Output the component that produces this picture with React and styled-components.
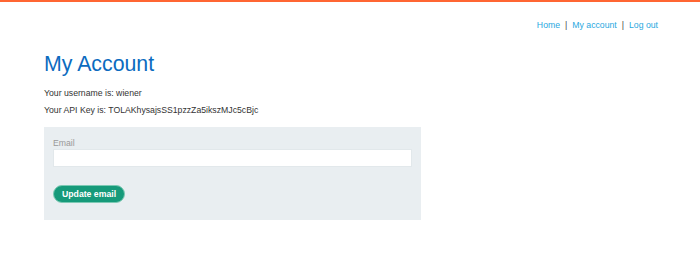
import React from "react";
import styled, { createGlobalStyle } from "styled-components";

const Global = createGlobalStyle`
  html, body { margin: 0; padding: 0; background: #fff; }
  body { font-family: "Liberation Sans", Arial, sans-serif; color: #333; }
`;

const Page = styled.div`
  border-top: 2px solid #ff6633;
  min-height: 278px;
`;

const Header = styled.header`
  display: flex;
  justify-content: flex-end;
  align-items: center;
  height: 45px;
  padding-right: 42px;
`;

const Nav = styled.nav`
  display: flex;
  align-items: center;
  gap: 5px;
  font-size: 8.7px;
`;

const NavLink = styled.a`
  color: #29a8e0;
  text-decoration: none;
`;

const Sep = styled.span`
  color: #444;
`;

const Main = styled.main`
  padding-left: 44px;
`;

const Title = styled.h1`
  margin: 4px 0 11px;
  font-size: 21.3px;
  font-weight: 400;
  color: #0b6bbf;
  line-height: 26px;
`;

const Line = styled.p`
  margin: 0 0 7px;
  font-size: 8.7px;
  line-height: 10px;
  color: #333;
`;

const Panel = styled.form`
  width: 359px;
  margin-top: 12px;
  background: #e9eef1;
  padding: 10px 9px 17px;
  display: flex;
  flex-direction: column;
  align-items: flex-start;
`;

const Label = styled.label`
  font-size: 8.7px;
  line-height: 12px;
  color: #999;
`;

const Input = styled.input`
  box-sizing: border-box;
  width: 100%;
  height: 18px;
  margin: 0;
  border: 1px solid #e2e8eb;
  background: #fff;
  outline: none;
`;

const Button = styled.button`
  margin-top: 18px;
  height: 18px;
  padding: 0 8px;
  border: 1px solid #7cc9b4;
  border-radius: 9px;
  background: #169a7a;
  color: #fff;
  font-family: "Liberation Sans", Arial, sans-serif;
  font-weight: 700;
  font-size: 8.7px;
  line-height: 16px;
  cursor: pointer;
`;

export default function App() {
  return (
    <>
      <Global />
      <Page>
        <Header>
          <Nav>
            <NavLink href="#">Home</NavLink>
            <Sep>|</Sep>
            <NavLink href="#">My account</NavLink>
            <Sep>|</Sep>
            <NavLink href="#">Log out</NavLink>
          </Nav>
        </Header>
        <Main>
          <Title>My Account</Title>
          <Line>Your username is: wiener</Line>
          <Line>Your API Key is: TOLAKhysajsSS1pzzZa5ikszMJc5cBjc</Line>
          <Panel onSubmit={(e) => e.preventDefault()}>
            <Label>Email</Label>
            <Input type="email" />
            <Button type="submit">Update email</Button>
          </Panel>
        </Main>
      </Page>
    </>
  );
}
